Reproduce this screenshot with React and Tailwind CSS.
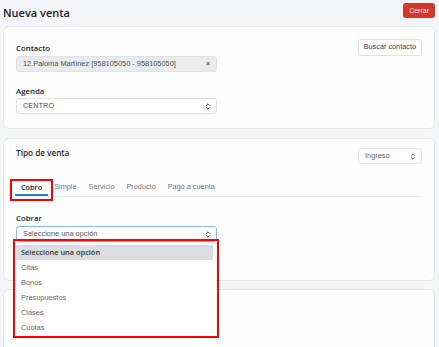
function UpDown() {
  return (
    <svg width="6" height="9" viewBox="0 0 6 9" className="shrink-0">
      <path d="M1.2 3.6 L3 1.8 L4.8 3.6 M1.2 5.4 L3 7.2 L4.8 5.4" fill="none" stroke="#343a40" strokeWidth="0.9" />
    </svg>
  )
}

function Select({ value, className = '' }) {
  return (
    <div className={`h-[16px] border rounded-[3px] bg-white flex items-center justify-between pl-[6px] pr-[5px] text-[7.4px] ${className}`}>
      <span>{value}</span>
      <UpDown />
    </div>
  )
}

const tabs = ['Cobro', 'Simple', 'Servicio', 'Producto', 'Pago a cuenta']
const options = ['Seleccione una opción', 'Citas', 'Bonos', 'Presupuestos', 'Clases', 'Cuotas']

const label = "font-['Open_Sans',sans-serif] text-[7.8px] font-semibold leading-[10px] text-[#212529]"

export default function App() {
  return (
    <div className="h-[347px] overflow-hidden bg-[#f4f5f8] pl-[3px] pr-[4px] pt-[3px] font-['Liberation_Sans',Arial,sans-serif] text-[#212529]">
      <div className="flex items-start justify-between h-[18px] mb-[5px]">
        <h1 className="font-['Open_Sans',sans-serif] text-[11px] font-semibold leading-[14px] mt-[3px] text-[#222]">Nueva venta</h1>
        <button className="h-[15px] px-[6px] rounded-[3px] bg-[#d5352c] text-[#fbe9e8] text-[7px] leading-[15px]">Cerrar</button>
      </div>

      <div className="border border-[#e6e8ec] rounded-[6px] bg-[#fefefe] px-[12px] pt-[12px] pb-[14px]">
        <div className="flex items-center justify-between h-[17px]">
          <span className={label}>Contacto</span>
          <button className="h-[17px] px-[5px] border border-[#dee2e6] rounded-[3px] bg-white text-[7.3px] text-[#3a3f44]">Buscar contacto</button>
        </div>
        <div className="w-[201px] h-[16px] border border-[#dee2e6] rounded-[3px] bg-[#e9ecef] flex items-center justify-between pl-[6px] pr-[6px] text-[7.4px] text-[#495057]">
          <span>12.Paloma Martínez [958105050 - 958105050]</span>
          <span className="text-[7px] font-bold text-[#555]">×</span>
        </div>
        <div className={`${label} mt-[14px] mb-[2px]`}>Agenda</div>
        <Select value="CENTRO" className="w-[201px] border-[#dee2e6] text-[#495057]" />
      </div>

      <div className="relative mt-[9px] border border-[#e6e8ec] rounded-[6px] bg-[#fefefe] px-[12px] pt-[9px] pb-[38px]">
        <div className="flex items-start justify-between h-[16px]">
          <span className={`${label} text-[8.2px]`}>Tipo de venta</span>
          <Select value="Ingreso" className="w-[64px] border-[#dee2e6] text-[#666]" />
        </div>
        <div className="mt-[12px] flex border-b border-[#e9ebee]">
          {tabs.map((t, i) => (
            <div
              key={t}
              className={`px-[6px] pt-[6px] pb-[2px] text-[7.3px] leading-[10px] border-b-2 ${i === 0 ? "-ml-[1px] font-['Open_Sans',sans-serif] font-semibold text-[#212529] border-[#3b7cc2]" : 'text-[#757575] border-transparent'}`}
            >
              {t}
            </div>
          ))}
        </div>
        <div className="absolute left-[6px] top-[40px] w-[43px] h-[22px] border-2 border-[#ff0000]" />

        <div className={`${label} mt-[16px] mb-[3px]`}>Cobrar</div>
        <div className="relative w-[201px]">
          <Select value="Seleccione una opción" className="border-[#86b7fe] text-[#555]" />
          <div className="absolute z-10 left-0 top-[16px] w-[200px] bg-white pt-[3px] pb-[1px]">
            {options.map((o, i) => (
              <div
                key={o}
                className={`h-[15px] pl-[5px] flex items-center text-[7.4px] ${i === 0 ? "w-[197px] bg-[#dcdde2] font-['Open_Sans',sans-serif] font-semibold text-[#333]" : 'text-[#6a6a6a]'}`}
              >
                {o}
              </div>
            ))}
          </div>
          <div className="absolute z-20 left-[-3px] top-[13px] w-[206px] h-[99px] border-2 border-[#ff0000]" />
        </div>
      </div>

      <div className="mt-[8px] h-[80px] border border-[#e6e8ec] rounded-[6px] bg-[#fefefe]" />
    </div>
  )
}
